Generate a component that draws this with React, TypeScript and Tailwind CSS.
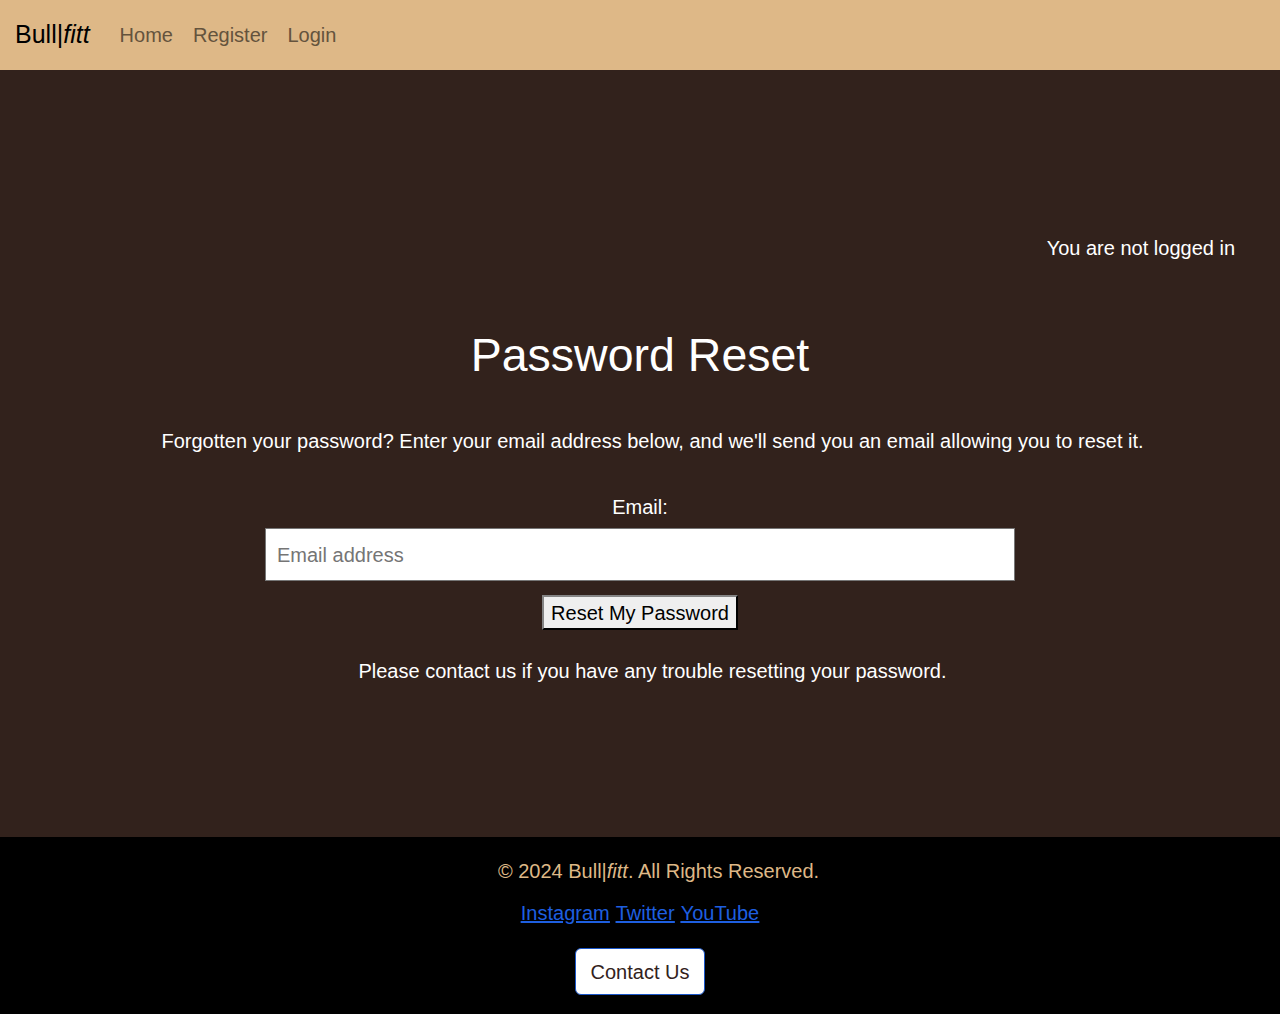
const font = "font-['Liberation_Sans',Arial,sans-serif]";

function NavBar() {
  return (
    <nav className="flex h-[70px] items-center bg-[#deb887] px-[15px]">
      <a href="#" className="mr-[30px] text-[25px] text-black">
        Bull|<i>fitt</i>
      </a>
      <ul className="flex gap-[20px] text-[20px] text-[#64533d]">
        <li>
          <a href="#">Home</a>
        </li>
        <li>
          <a href="#">Register</a>
        </li>
        <li>
          <a href="#">Login</a>
        </li>
      </ul>
    </nav>
  );
}

function ResetForm() {
  return (
    <main className="flex h-[767px] flex-col bg-[#32221c] text-white">
      <div className="flex justify-end px-[45px] pt-[163px] text-[20px]">
        <p>You are not logged in</p>
      </div>
      <h1 className="mt-[64px] text-center text-[46.5px] leading-[56px]">
        Password Reset
      </h1>
      <p className="mt-[46px] pl-[25px] text-center text-[20px] leading-[24px]">
        Forgotten your password? Enter your email address below, and we'll send
        you an email allowing you to reset it.
      </p>
      <form className="mt-[42px] flex flex-col items-center">
        <label htmlFor="email" className="text-[20px] leading-[24px]">
          Email:
        </label>
        <input
          id="email"
          type="email"
          placeholder="Email address"
          className="mt-[9px] h-[53px] w-[750px] border border-[#767676] bg-white px-[11px] pt-[2px] text-[20px] text-black placeholder:text-[#757575]"
        />
        <button
          type="submit"
          className="mt-[14px] h-[35px] border-2 border-t-[#858585] border-l-[#858585] border-r-black border-b-black bg-[#efefef] px-[7px] text-[20px] text-black"
        >
          Reset My Password
        </button>
      </form>
      <p className="mt-[29px] pl-[25px] text-center text-[20px] leading-[24px]">
        Please contact us if you have any trouble resetting your password.
      </p>
    </main>
  );
}

function Footer() {
  return (
    <footer className="flex h-[177px] flex-col items-center bg-black pt-[22px]">
      <p className="pl-[37px] text-[20px] leading-[24px] text-[#deb887]">
        © 2024 Bull|<i>fitt</i>. All Rights Reserved.
      </p>
      <div className="mt-[18px] flex gap-[6px] text-[20px] leading-[24px] text-[#1e5fe0] underline">
        <a href="#">Instagram</a>
        <a href="#">Twitter</a>
        <a href="#">YouTube</a>
      </div>
      <button className="mt-[23px] h-[47px] w-[130px] rounded-[6px] border border-[#1a56c8] bg-white text-[20px] text-[#32221c]">
        Contact Us
      </button>
    </footer>
  );
}

export default function App() {
  return (
    <div className={`${font} min-h-[1014px]`}>
      <NavBar />
      <ResetForm />
      <Footer />
    </div>
  );
}
